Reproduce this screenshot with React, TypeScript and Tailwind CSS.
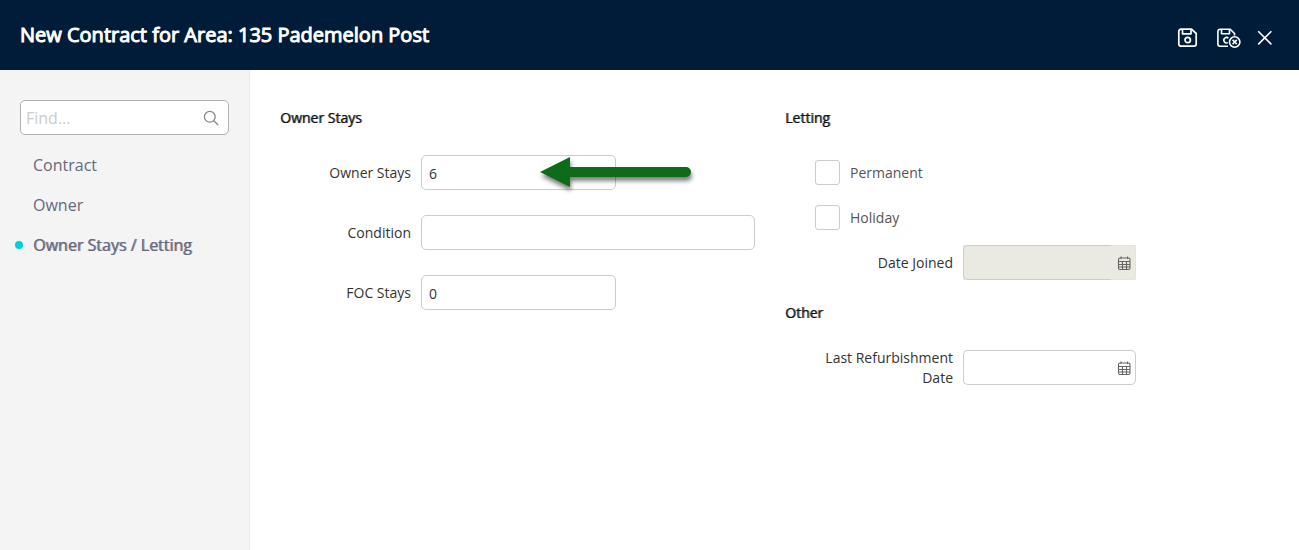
import { useState, type ReactNode } from 'react';

const SECTIONS = ['Contract', 'Owner', 'Owner Stays / Letting'];

const inputClass = 'h-[35px] rounded-[5px] border border-[#ccc] bg-white px-[7px] pt-[2px] text-sm text-[#333] outline-none';

export default function App() {
  const [find, setFind] = useState('');
  const [active, setActive] = useState(SECTIONS[2]);
  const [ownerStays, setOwnerStays] = useState('6');
  const [condition, setCondition] = useState('');
  const [focStays, setFocStays] = useState('0');

  return (
    <div className="flex min-h-screen flex-col bg-white font-['Open_Sans',sans-serif] text-sm text-[#333]">
      <header className="flex h-[70px] items-center justify-between bg-[#001c38] pr-[26px] pl-5 text-white">
        <h1 className="text-xl [-webkit-text-stroke:1px]">New Contract for Area: 135 Pademelon Post</h1>
        <div className="flex items-center gap-4 pt-[6px]">
          <button type="button" aria-label="Save"><SaveIcon /></button>
          <button type="button" aria-label="Save and close"><SaveCloseIcon /></button>
          <button type="button" aria-label="Close"><CloseIcon /></button>
        </div>
      </header>

      <div className="flex flex-1">
        <aside className="w-[250px] shrink-0 border-r border-[#e8e8e8] bg-[#f4f4f4] py-[30px] pr-5">
          <div className="relative ml-5">
            <input
              value={find}
              onChange={(e) => setFind(e.target.value)}
              placeholder="Find..."
              aria-label="Find"
              className="h-[35px] w-full rounded-[5px] border border-[#b0b0b0] bg-white pr-9 pl-[5px] text-base text-[#555] outline-none placeholder:text-[#ccc]"
            />
            <SearchIcon />
          </div>
          <nav className="mt-[10px]">
            {SECTIONS.map((s) => (
              <a
                key={s}
                href="#"
                onClick={(e) => { e.preventDefault(); setActive(s); }}
                className="flex h-10 items-center pl-[15px] text-base text-[#66697c]"
              >
                <span className={`mr-[10px] size-2 rounded-full ${active === s ? 'bg-[#00cfdc]' : ''}`} />
                <span className={active === s ? '[text-shadow:1px_0_0_#66697cb0]' : ''}>{s}</span>
              </a>
            ))}
          </nav>
        </aside>

        <main className="grid flex-1 grid-cols-[minmax(0,475px)_minmax(0,351px)] items-start gap-[30px] px-[30px] pt-[38px]">
          <section>
            <Heading>Owner Stays</Heading>
            <div className="space-y-[25px]">
              <div className="flex items-center gap-[10px]">
                <label htmlFor="owner-stays" className="w-[131px] shrink-0 text-right">Owner Stays</label>
                <div className="relative w-[195px]">
                  <input id="owner-stays" value={ownerStays} onChange={(e) => setOwnerStays(e.target.value)} className={`${inputClass} w-full`} />
                  <Arrow />
                </div>
              </div>
              <div className="flex items-center gap-[10px]">
                <label htmlFor="condition" className="w-[131px] shrink-0 text-right">Condition</label>
                <input id="condition" value={condition} onChange={(e) => setCondition(e.target.value)} className={`${inputClass} min-w-0 flex-1`} />
              </div>
              <div className="flex items-center gap-[10px]">
                <label htmlFor="foc-stays" className="w-[131px] shrink-0 text-right">FOC Stays</label>
                <input id="foc-stays" value={focStays} onChange={(e) => setFocStays(e.target.value)} className={`${inputClass} w-[195px]`} />
              </div>
            </div>
          </section>

          <section>
            <Heading>Letting</Heading>
            <div className="mb-[23px] space-y-[10px]">
              <Checkbox label="Permanent" />
              <Checkbox label="Holiday" />
              <DateField id="date-joined" label="Date Joined" disabled />
            </div>
            <Heading>Other</Heading>
            <DateField id="last-refurbishment" label="Last Refurbishment Date" />
          </section>
        </main>
      </div>
    </div>
  );
}

function Heading({ children }: { children: ReactNode }) {
  return <h2 className="mb-[27px] text-sm leading-5 text-[#111] [text-shadow:1px_0_0_#111111a0]">{children}</h2>;
}

function Checkbox({ label }: { label: string }) {
  return (
    <label className="flex h-[35px] items-center gap-[10px] pl-[30px] text-[#555]">
      <input type="checkbox" className="size-[25px] appearance-none rounded-[3px] border border-[#ccc] bg-white checked:bg-[#00cfdc]" />
      {label}
    </label>
  );
}

function DateField({ id, label, disabled = false }: { id: string; label: string; disabled?: boolean }) {
  const [value, setValue] = useState('');
  return (
    <div className="flex items-center gap-[10px]">
      <label htmlFor={id} className="flex h-[35px] w-[168px] shrink-0 items-center justify-end pl-[30px] text-right leading-5">{label}</label>
      <div className={`flex min-w-0 flex-1 ${disabled ? 'bg-[#eaeae2]' : ''}`}>
        <input
          id={id}
          value={value}
          onChange={(e) => setValue(e.target.value)}
          disabled={disabled}
          className="h-[35px] min-w-0 flex-1 rounded-l-[5px] border border-r-0 border-[#ccc] px-[7px] outline-none"
        />
        <button
          type="button"
          aria-label={`Pick ${label}`}
          disabled={disabled}
          className={`flex h-[35px] w-[25px] items-center justify-center rounded-r-[5px] border border-l-0 pt-[2px] pl-[2px] ${disabled ? 'border-[#e4e4dd]' : 'border-[#ccc]'}`}
        >
          <CalendarIcon />
        </button>
      </div>
    </div>
  );
}

function Arrow() {
  return (
    <svg viewBox="0 0 151 30" className="pointer-events-none absolute top-[2px] left-[119px] h-[30px] w-[151px] overflow-visible drop-shadow-[1px_4px_2px_rgba(0,0,0,0.5)]" fill="#0d6b19">
      <path d="M0 15 30 0V10H146a5 5 0 0 1 0 10H30V30Z" />
    </svg>
  );
}

function SearchIcon() {
  return (
    <svg viewBox="0 0 16 16" className="absolute top-[10px] right-[10px] size-4" fill="none" stroke="#888" strokeWidth="1.3" strokeLinecap="round">
      <circle cx="6.8" cy="6.8" r="5.4" />
      <path d="m10.8 10.8 4 4" />
    </svg>
  );
}

function SaveIcon() {
  return (
    <svg viewBox="0 0 24 20" className="h-5 w-6" fill="none" stroke="currentColor" strokeWidth="1.7" strokeLinejoin="round">
      <path d="M4 1.2H14.5L19.2 5.5V16a2.2 2.2 0 0 1-2.2 2.2H4A2.2 2.2 0 0 1 1.8 16V3.4A2.2 2.2 0 0 1 4 1.2Z" />
      <path d="M5.5 1.2V5.8H14V1.2" />
      <circle cx="10.7" cy="12" r="2.7" />
    </svg>
  );
}

function SaveCloseIcon() {
  return (
    <svg viewBox="0 0 24 20" className="h-5 w-6" fill="none" stroke="currentColor" strokeWidth="1.6" strokeLinejoin="round">
      <path d="M11 18.2H3A2.2 2.2 0 0 1 .9 16V3.4A2.2 2.2 0 0 1 3.1 1.2H13.2L17.5 5.5V7.5" />
      <path d="M4.5 1.2V5.8H12.5V1.2" />
      <path d="M11.4 10.2A2.7 2.7 0 1 0 10.8 14.6" />
      <circle cx="17.7" cy="14" r="5.2" />
      <path d="m15.6 11.9 4.2 4.2m0-4.2-4.2 4.2" />
    </svg>
  );
}

function CloseIcon() {
  return (
    <svg viewBox="0 0 16 16" className="size-4" fill="none" stroke="currentColor" strokeWidth="1.6" strokeLinecap="round">
      <path d="m1.7 1.7 12.2 12.2M13.9 1.7 1.7 13.9" />
    </svg>
  );
}

function CalendarIcon() {
  return (
    <svg viewBox="0 0 14 15" className="h-[15px] w-[14px]" fill="none" stroke="#666" strokeWidth="1.1">
      <rect x="1.5" y="2" width="11.5" height="11.5" rx="1.5" />
      <path d="M1.5 5.5H13M1.5 8.5H13M1.5 11H13M5.5 5.5V13.5M9.5 5.5V13.5M4 .5V3M10.5 .5V3" />
    </svg>
  );
}
